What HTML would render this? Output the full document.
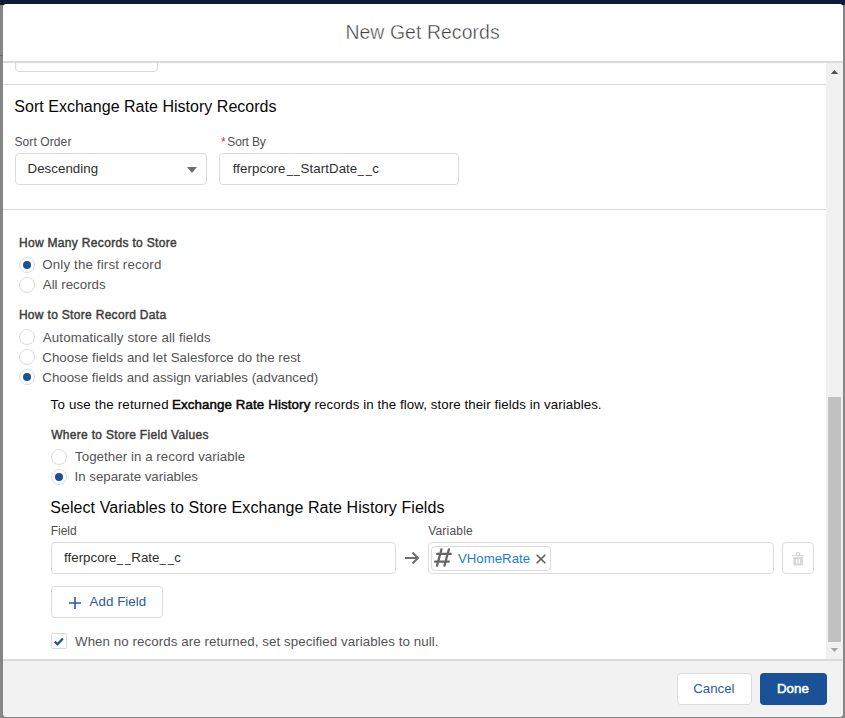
<!DOCTYPE html>
<html><head><meta charset="utf-8">
<style>
html,body{margin:0;padding:0;}
body{width:845px;height:718px;position:relative;overflow:hidden;background:#868686;font-family:"Liberation Sans",sans-serif;}
.t{position:absolute;white-space:nowrap;}
.b{position:absolute;}
.u{display:inline-block;transform:scaleX(0.82);}
</style></head><body>
<div class="b" style="left:0px;top:0px;width:845px;height:5px;background:#101c35;"></div>
<div class="b" style="left:0px;top:55px;width:3px;height:1px;background:#6a6a6a;"></div>
<div class="b" style="left:3px;top:4px;width:840px;height:713px;background:#fff;border-radius:4px;overflow:hidden;"></div>
<div class="b" style="left:3px;top:659px;width:840px;height:58px;background:#f3f2f2;border-top:2px solid #dddbda;box-sizing:border-box;border-radius:0 0 4px 4px;"></div>
<div class="b" style="left:826px;top:63px;width:17px;height:596px;background:#f1f1f1;"></div>
<div class="b" style="left:828px;top:397px;width:13px;height:245px;background:#c1c1c1;"></div>
<svg class="b" style="left:826px;top:63px" width="17" height="17"><path d="M4.8 10.9 L8.5 6.9 L12.2 10.9 Z" fill="#505050"/></svg>
<svg class="b" style="left:826px;top:642px" width="17" height="17"><path d="M4.8 5.9 L8.5 9.9 L12.2 5.9 Z" fill="#a3a3a3"/></svg>
<div class="b" style="left:15px;top:41px;width:143px;height:31px;border:1px solid #dddbda;border-radius:4px;box-sizing:border-box;background:#fff;"></div>
<div class="b" style="left:3px;top:4px;width:840px;height:57px;background:#fff;border-radius:4px 4px 0 0;"></div>
<div class="b" style="left:3px;top:61px;width:840px;height:2px;background:#dddbda;"></div>
<div id="title" class="t" style="left:345.40px;top:22.88px;font-size:19.4px;line-height:19.4px;color:#3e3e3c;font-weight:normal;letter-spacing:0.086px;-webkit-text-stroke:0.4px #fff;">New Get Records</div>
<div class="b" style="left:3px;top:84px;width:823px;height:1px;background:#dddbda;"></div>
<div id="heading" class="t" style="left:14.30px;top:99.26px;font-size:16px;line-height:16px;color:#080707;font-weight:normal;letter-spacing:0.024px;">Sort Exchange Rate History Records</div>
<div id="sortorder" class="t" style="left:14.40px;top:135.64px;font-size:12px;line-height:12px;color:#4f4f4f;font-weight:normal;letter-spacing:0.111px;">Sort Order</div>
<div id="ast" class="t" style="left:221.00px;top:135.64px;font-size:12px;line-height:12px;color:#c23934;font-weight:normal;letter-spacing:0.000px;">*</div>
<div id="sortby" class="t" style="left:227.30px;top:135.64px;font-size:12px;line-height:12px;color:#4f4f4f;font-weight:normal;letter-spacing:-0.133px;">Sort By</div>
<div class="b" style="left:15px;top:153px;width:192px;height:32px;border:1px solid #dddbda;border-radius:4px;box-sizing:border-box;background:#fff;"></div>
<div id="desc" class="t" style="left:27.50px;top:161.54px;font-size:13.3px;line-height:13.3px;color:#2e2e2e;font-weight:normal;letter-spacing:0.044px;">Descending</div>
<svg class="b" style="left:185px;top:163px" width="14" height="12"><path d="M2 3.9 L11.9 3.9 L6.95 10.1 Z" fill="#706e6b"/></svg>
<div class="b" style="left:219px;top:153px;width:240px;height:32px;border:1px solid #dddbda;border-radius:4px;box-sizing:border-box;background:#fff;"></div>
<div id="fferp" class="t" style="left:232.70px;top:161.54px;font-size:13.3px;line-height:13.3px;color:#2e2e2e;font-weight:normal;letter-spacing:0.073px;">fferpcore<span class=u>_</span><span class=u>_</span>StartDate<span class=u>_</span><span class=u>_</span>c</div>
<div class="b" style="left:3px;top:209px;width:823px;height:1px;background:#dddbda;"></div>
<div id="howmany" class="t" style="left:18.90px;top:236.64px;font-size:12px;line-height:12px;color:#3e3e3c;font-weight:normal;letter-spacing:0.325px;-webkit-text-stroke:0.45px #3e3e3c;">How Many Records to Store</div>
<div class="b" style="left:19px;top:257px;width:16px;height:16px;border:1px solid #dddbda;border-radius:50%;background:#fff;box-sizing:border-box;"></div>
<div class="b" style="left:23px;top:261px;width:8px;height:8px;border-radius:50%;background:#1b5297;"></div>
<div id="only" class="t" style="left:42.30px;top:258.04px;font-size:13.3px;line-height:13.3px;color:#545454;font-weight:normal;letter-spacing:0.150px;">Only the first record</div>
<div class="b" style="left:19px;top:277px;width:16px;height:16px;border:1px solid #dddbda;border-radius:50%;background:#fff;box-sizing:border-box;"></div>
<div id="all" class="t" style="left:42.80px;top:277.84px;font-size:13.3px;line-height:13.3px;color:#545454;font-weight:normal;letter-spacing:-0.000px;">All records</div>
<div id="howto" class="t" style="left:18.90px;top:308.74px;font-size:12px;line-height:12px;color:#3e3e3c;font-weight:normal;letter-spacing:0.313px;-webkit-text-stroke:0.45px #3e3e3c;">How to Store Record Data</div>
<div class="b" style="left:19px;top:329px;width:16px;height:16px;border:1px solid #dddbda;border-radius:50%;background:#fff;box-sizing:border-box;"></div>
<div id="auto" class="t" style="left:42.80px;top:330.84px;font-size:13.3px;line-height:13.3px;color:#545454;font-weight:normal;letter-spacing:0.131px;">Automatically store all fields</div>
<div class="b" style="left:19px;top:349px;width:16px;height:16px;border:1px solid #dddbda;border-radius:50%;background:#fff;box-sizing:border-box;"></div>
<div id="choose1" class="t" style="left:42.30px;top:350.84px;font-size:13.3px;line-height:13.3px;color:#545454;font-weight:normal;letter-spacing:0.023px;">Choose fields and let Salesforce do the rest</div>
<div class="b" style="left:19px;top:369px;width:16px;height:16px;border:1px solid #dddbda;border-radius:50%;background:#fff;box-sizing:border-box;"></div>
<div class="b" style="left:23px;top:373px;width:8px;height:8px;border-radius:50%;background:#1b5297;"></div>
<div id="choose2" class="t" style="left:42.30px;top:370.74px;font-size:13.3px;line-height:13.3px;color:#545454;font-weight:normal;letter-spacing:0.005px;">Choose fields and assign variables (advanced)</div>
<div id="touse1" class="t" style="left:50.60px;top:397.74px;font-size:13.3px;line-height:13.3px;color:#080707;font-weight:normal;letter-spacing:0.189px;">To use the returned</div>
<div id="touse2" class="t" style="left:171.90px;top:397.74px;font-size:13.3px;line-height:13.3px;color:#080707;font-weight:normal;letter-spacing:0.120px;-webkit-text-stroke:0.5px #080707;">Exchange Rate History</div>
<div id="touse3" class="t" style="left:314.50px;top:397.74px;font-size:13.3px;line-height:13.3px;color:#080707;font-weight:normal;letter-spacing:0.077px;">records in the flow, store their fields in variables.</div>
<div id="where" class="t" style="left:51.20px;top:428.84px;font-size:12px;line-height:12px;color:#3e3e3c;font-weight:normal;letter-spacing:0.308px;-webkit-text-stroke:0.45px #3e3e3c;">Where to Store Field Values</div>
<div class="b" style="left:51px;top:449px;width:16px;height:16px;border:1px solid #dddbda;border-radius:50%;background:#fff;box-sizing:border-box;"></div>
<div id="together" class="t" style="left:75.00px;top:450.04px;font-size:13.3px;line-height:13.3px;color:#545454;font-weight:normal;letter-spacing:0.057px;">Together in a record variable</div>
<div class="b" style="left:51px;top:469px;width:16px;height:16px;border:1px solid #dddbda;border-radius:50%;background:#fff;box-sizing:border-box;"></div>
<div class="b" style="left:55px;top:473px;width:8px;height:8px;border-radius:50%;background:#1b5297;"></div>
<div id="insep" class="t" style="left:74.50px;top:470.04px;font-size:13.3px;line-height:13.3px;color:#545454;font-weight:normal;letter-spacing:0.000px;">In separate variables</div>
<div id="select" class="t" style="left:50.20px;top:499.76px;font-size:16px;line-height:16px;color:#080707;font-weight:normal;letter-spacing:0.079px;">Select Variables to Store Exchange Rate History Fields</div>
<div id="field" class="t" style="left:50.80px;top:524.64px;font-size:12px;line-height:12px;color:#4f4f4f;font-weight:normal;letter-spacing:-0.050px;">Field</div>
<div id="variable" class="t" style="left:428.20px;top:524.64px;font-size:12px;line-height:12px;color:#4f4f4f;font-weight:normal;letter-spacing:0.200px;">Variable</div>
<div class="b" style="left:51px;top:542px;width:345px;height:32px;border:1px solid #dddbda;border-radius:4px;box-sizing:border-box;background:#fff;"></div>
<div id="fferp2" class="t" style="left:64.10px;top:550.74px;font-size:13.3px;line-height:13.3px;color:#2e2e2e;font-weight:normal;letter-spacing:0.012px;">fferpcore<span class=u>_</span><span class=u>_</span>Rate<span class=u>_</span><span class=u>_</span>c</div>
<svg class="b" style="left:402px;top:550px" width="20" height="16"><path d="M3 8 H16 M10.5 2.5 L16 8 L10.5 13.5" stroke="#706e6b" stroke-width="2" fill="none"/></svg>
<div class="b" style="left:428px;top:542px;width:346px;height:32px;border:1px solid #dddbda;border-radius:4px;box-sizing:border-box;background:#fff;"></div>
<div class="b" style="left:431px;top:546px;width:120px;height:25px;border:1px solid #dddbda;border-radius:4px;box-sizing:border-box;background:#fff;"></div>
<svg class="b" style="left:430px;top:545px" width="26" height="26"><g stroke="#656565" stroke-width="2.3" fill="none" stroke-linecap="round"><path d="M11.5 4.3 L7 20.7 M18.9 4.3 L14.4 20.7 M7.1 8.9 H20.8 M5.1 16.7 H18.8"/></g></svg>
<div id="vhome" class="t" style="left:458.00px;top:551.83px;font-size:13.2px;line-height:13.2px;color:#1b7bd6;font-weight:normal;letter-spacing:0.025px;">VHomeRate</div>
<svg class="b" style="left:534px;top:552px" width="14" height="14"><path d="M2.7 2.7 L11.3 11.3 M11.3 2.7 L2.7 11.3" stroke="#5c5c5c" stroke-width="1.6" fill="none"/></svg>
<div class="b" style="left:782px;top:542px;width:32px;height:32px;border:1px solid #dddbda;border-radius:4px;box-sizing:border-box;background:#fff;"></div>
<svg class="b" style="left:790px;top:550px" width="16" height="17"><path d="M2 5.6 H14" stroke="#d8d8d8" stroke-width="1.2"/><path d="M6.3 5.6 V4.4 A1.7 1.7 0 0 1 9.7 4.4 V5.6" stroke="#d8d8d8" stroke-width="1.2" fill="none"/><path d="M3.3 7 H12.9 V14.6 A0.8 0.8 0 0 1 12.1 15.4 H4.1 A0.8 0.8 0 0 1 3.3 14.6 Z" fill="#d8d8d8"/><path d="M6.8 9 V13.6 M9.4 9 V13.6" stroke="#fff" stroke-width="1.2"/></svg>
<div class="b" style="left:51px;top:586px;width:112px;height:32px;border:1px solid #dddbda;border-radius:4px;box-sizing:border-box;background:#fff;"></div>
<svg class="b" style="left:68px;top:596px" width="14" height="14"><path d="M7 1 V13 M1 7 H13" stroke="#2a5ca0" stroke-width="1.6"/></svg>
<div id="addf" class="t" style="left:89.60px;top:595.14px;font-size:13.3px;line-height:13.3px;color:#2a5ba0;font-weight:normal;letter-spacing:0.050px;">Add Field</div>
<div class="b" style="left:51px;top:633px;width:16px;height:16px;border:1px solid #dddbda;border-radius:2px;box-sizing:border-box;background:#fff;"></div>
<svg class="b" style="left:51px;top:633px" width="16" height="16"><path d="M3.8 8.6 L6.6 11.2 L11.9 5.6" stroke="#1b5297" stroke-width="2.2" fill="none" stroke-linejoin="miter"/></svg>
<div id="when" class="t" style="left:75.00px;top:634.54px;font-size:13.3px;line-height:13.3px;color:#545454;font-weight:normal;letter-spacing:0.082px;">When no records are returned, set specified variables to null.</div>
<div class="b" style="left:677px;top:673px;width:75px;height:32px;border:1px solid #dddbda;border-radius:4px;box-sizing:border-box;background:#fff;"></div>
<div id="cancel" class="t" style="left:693.20px;top:682.04px;font-size:13.3px;line-height:13.3px;color:#2a5ba0;font-weight:normal;letter-spacing:0.000px;">Cancel</div>
<div class="b" style="left:760px;top:673px;width:67px;height:32px;border-radius:4px;background:#1b5297;"></div>
<div id="done" class="t" style="left:777.00px;top:682.04px;font-size:13.3px;line-height:13.3px;color:#fff;font-weight:normal;letter-spacing:0.000px;-webkit-text-stroke:0.5px #fff;">Done</div>
</body></html>
